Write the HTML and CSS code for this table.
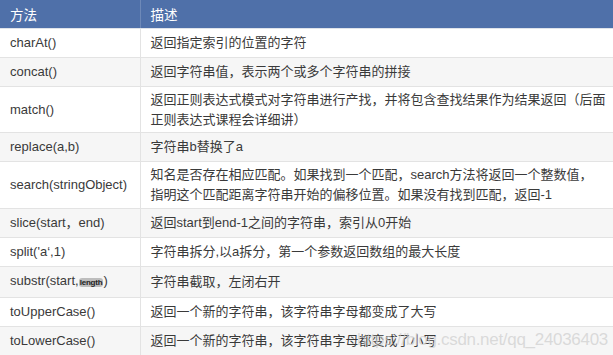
FILE: index.html
```html
<!DOCTYPE html>
<html lang="zh">
<head>
<meta charset="utf-8">
<title>String methods</title>
<link rel="stylesheet" href="styles.css">
</head>
<body>
<div class="wrap">
<table class="methods">
  <colgroup><col class="c1"><col class="c2"></colgroup>
  <thead>
    <tr class="h"><th>方法</th><th>描述</th></tr>
  </thead>
  <tbody>
    <tr class="r29"><td>charAt()</td><td>返回指定索引的位置的字符</td></tr>
    <tr class="r29 alt"><td>concat()</td><td>返回字符串值，表示两个或多个字符串的拼接</td></tr>
    <tr class="r46"><td>match()</td><td>返回正则表达式模式对字符串进行产找，并将包含查找结果作为结果返回（后面<br>正则表达式课程会详细讲）</td></tr>
    <tr class="r29 alt"><td>replace(a,b)</td><td>字符串b替换了a</td></tr>
    <tr class="r47"><td>search(stringObject)</td><td>知名是否存在相应匹配。如果找到一个匹配，search方法将返回一个整数值，<br>指明这个匹配距离字符串开始的偏移位置。如果没有找到匹配，返回-1</td></tr>
    <tr class="r29 alt"><td>slice(start，end)</td><td>返回start到end-1之间的字符串，索引从0开始</td></tr>
    <tr class="r29"><td>split('a‘,1)</td><td>字符串拆分,以a拆分，第一个参数返回数组的最大长度</td></tr>
    <tr class="r31 alt"><td>substr(start,<span class="len">length</span>)</td><td>字符串截取，左闭右开</td></tr>
    <tr class="r29"><td>toUpperCase()</td><td>返回一个新的字符串，该字符串字母都变成了大写</td></tr>
    <tr class="r29 alt"><td>toLowerCase()</td><td>返回一个新的字符串，该字符串字母都变成了小写</td></tr>
  </tbody>
</table>
<div class="mark">https://blog.csdn.net/qq_24036403</div>
</div>
</body>
</html>
```
FILE: styles.css
```css
html, body {
  margin: 0;
  padding: 0;
  background: #ffffff;
}
.wrap {
  position: relative;
  width: 613px;
  height: 355px;
  overflow: hidden;
}
.methods {
  width: 613px;
  border-collapse: collapse;
  table-layout: fixed;
  font-family: "Liberation Sans", "Noto Sans CJK SC", sans-serif;
  font-size: 13px;
  color: #3a3a3a;
}
.c1 { width: 140px; }
.c2 { width: 473px; }
.methods th {
  height: 28px;
  padding: 0 10px;
  text-align: left;
  font-weight: normal;
  font-size: 13.5px;
  color: #ffffff;
  background: #4f70a9;
  border-right: 1px solid #6e89b8;
  border-bottom: 1px solid #dfe3ea;
}
.methods th:last-child { border-right: none; }
.methods td {
  padding: 0 10px;
  line-height: 20px;
  border-bottom: 1px solid #e3e3e3;
  border-right: 1px solid #e3e3e3;
  white-space: nowrap;
  vertical-align: middle;
}
.methods td:last-child { border-right: none; }
.r29 td { height: 28px; }
.r31 td { height: 30px; }
.r46 td { height: 45px; }
.r47 td { height: 46px; }
.alt td { background: #f6f6f6; }
.len {
  font-size: 8px;
  font-weight: bold;
  color: #222;
  background: #bdbdbd;
  border-radius: 3px;
  padding: 0 1px;
  letter-spacing: -0.2px;
}
.mark {
  position: absolute;
  left: 357px;
  top: 330px;
  font-family: "Liberation Sans", sans-serif;
  font-size: 17px;
  letter-spacing: -0.3px;
  color: rgba(205, 205, 205, 0.7);
  white-space: nowrap;
}
```
